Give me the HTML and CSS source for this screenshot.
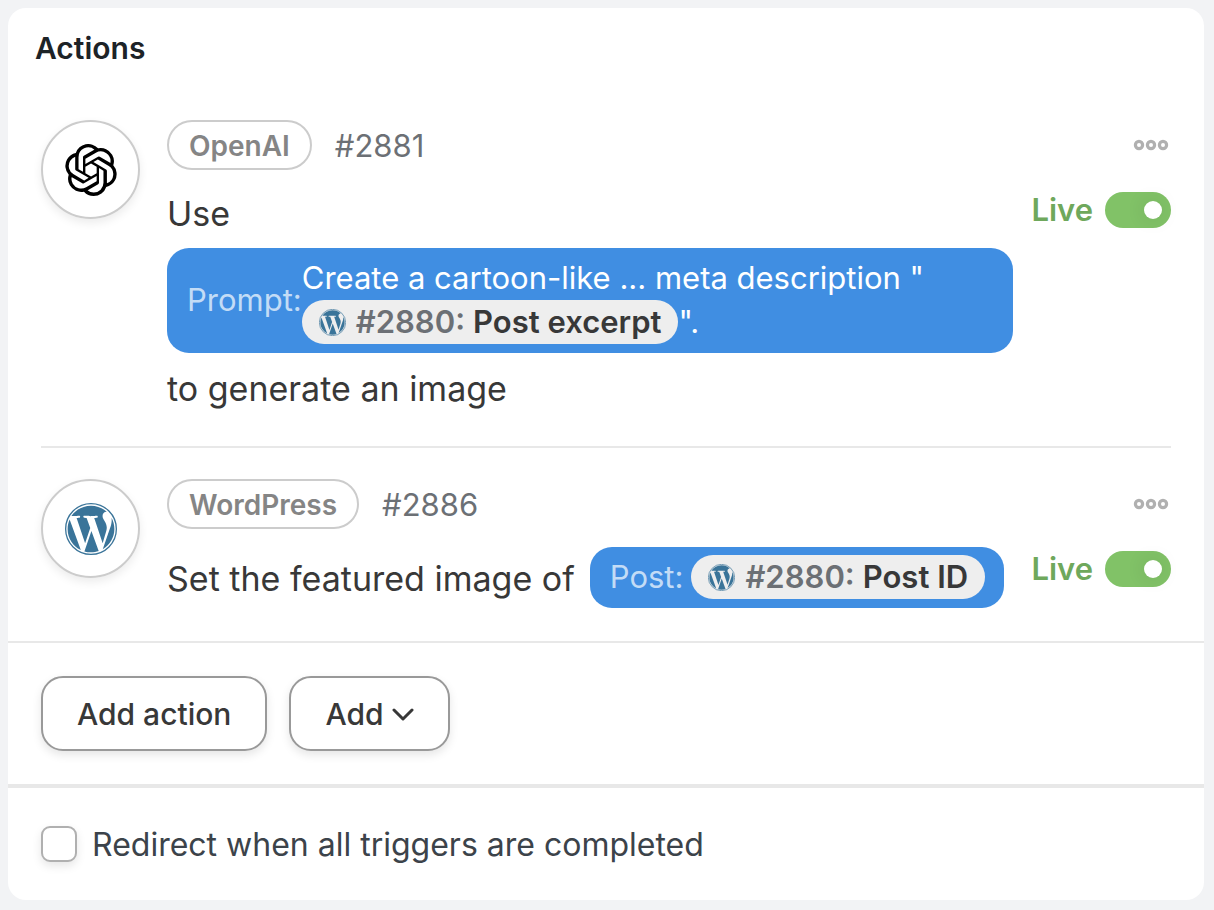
FILE: index.html
```html
<!doctype html>
<html lang="en">
<head>
    <meta charset="utf-8">
    <meta name="viewport" content="width=device-width, initial-scale=1">
    <title>Actions</title>
    <link rel="stylesheet" href="styles.css">
</head>
<body>
<!-- shared logo -->
<svg class="sprite" aria-hidden="true">
    <symbol id="wordpress" viewBox="0 0 24 24">
        <circle cx="12" cy="12" r="11.7" fill="none" stroke="currentColor" stroke-width=".6"/>
        <path fill="currentColor" d="M21.469 6.825c.84 1.537 1.318 3.3 1.318 5.175 0 3.979-2.156 7.456-5.363 9.325l3.295-9.527c.615-1.54.82-2.771.82-3.864 0-.405-.026-.78-.07-1.11m-7.981.105c.647-.03 1.232-.105 1.232-.105.582-.075.514-.93-.067-.899 0 0-1.755.135-2.88.135-1.064 0-2.85-.15-2.85-.15-.585-.03-.661.855-.075.885 0 0 .54.061 1.125.09l1.68 4.605-2.37 7.08L5.354 6.9c.649-.03 1.234-.1 1.234-.1.585-.075.516-.93-.065-.896 0 0-1.746.138-2.874.138-.2 0-.438-.008-.69-.015C4.911 3.15 8.235 1.215 12 1.215c2.809 0 5.365 1.072 7.286 2.833-.046-.003-.091-.009-.141-.009-1.06 0-1.812.923-1.812 1.914 0 .89.513 1.643 1.06 2.531.411.72.89 1.643.89 2.977 0 .915-.354 1.994-.821 3.479l-1.075 3.585-3.9-11.61.001.014zM12 22.784c-1.059 0-2.081-.153-3.048-.437l3.237-9.406 3.315 9.087c.024.053.05.101.078.149-1.12.393-2.325.609-3.582.609M1.211 12c0-1.564.336-3.05.935-4.39L7.29 21.709C3.694 19.96 1.212 16.271 1.211 12"/>
    </symbol>
    <symbol id="dots" viewBox="0 0 36 12">
        <g fill="none" stroke="currentColor" stroke-width="3.2">
            <circle cx="6" cy="6" r="3.6"/>
            <circle cx="18" cy="6" r="3.6"/>
            <circle cx="30" cy="6" r="3.6"/>
        </g>
    </symbol>
</svg>

<main class="card">
    <h2 class="card-title">Actions</h2>

    <div class="action-list">
        <section class="action">
            <div class="action-icon">
                <svg class="logo" viewBox="0 0 24 24" aria-hidden="true">
                    <path d="M22.2819 9.8211a5.9847 5.9847 0 0 0-.5157-4.9108 6.0462 6.0462 0 0 0-6.5098-2.9A6.0651 6.0651 0 0 0 4.9807 4.1818a5.9847 5.9847 0 0 0-3.9977 2.9 6.0462 6.0462 0 0 0 .7427 7.0966 5.98 5.98 0 0 0 .511 4.9107 6.051 6.051 0 0 0 6.5146 2.9001A5.9847 5.9847 0 0 0 13.2599 24a6.0557 6.0557 0 0 0 5.7718-4.2058 5.9894 5.9894 0 0 0 3.9977-2.9001 6.0557 6.0557 0 0 0-.7475-7.0729zm-9.022 12.6081a4.4755 4.4755 0 0 1-2.8764-1.0408l.1419-.0804 4.7783-2.7582a.7948.7948 0 0 0 .3927-.6813v-6.7369l2.02 1.1686a.071.071 0 0 1 .038.052v5.5826a4.504 4.504 0 0 1-4.4945 4.4944zm-9.6607-4.1254a4.4708 4.4708 0 0 1-.5346-3.0137l.142.0852 4.783 2.7582a.7712.7712 0 0 0 .7806 0l5.8428-3.3685v2.3324a.0804.0804 0 0 1-.0332.0615L9.74 19.9502a4.4992 4.4992 0 0 1-6.1408-1.6464zM2.3408 7.8956a4.485 4.485 0 0 1 2.3655-1.9728V11.6a.7664.7664 0 0 0 .3879.6765l5.8144 3.3543-2.0201 1.1685a.0757.0757 0 0 1-.071 0l-4.8303-2.7865A4.504 4.504 0 0 1 2.3408 7.872zm16.5963 3.8558L13.1038 8.364 15.1192 7.2a.0757.0757 0 0 1 .071 0l4.8303 2.7913a4.4944 4.4944 0 0 1-.6765 8.1042v-5.6772a.79.79 0 0 0-.407-.667zm2.0107-3.0231l-.142-.0852-4.7735-2.7818a.7759.7759 0 0 0-.7854 0L9.409 9.2297V6.8974a.0662.0662 0 0 1 .0284-.0615l4.8303-2.7866a4.4992 4.4992 0 0 1 6.6802 4.66zM8.3065 12.863l-2.02-1.1638a.0804.0804 0 0 1-.038-.0567V6.0742a4.4992 4.4992 0 0 1 7.3757-3.4537l-.142.0805L8.704 5.459a.7948.7948 0 0 0-.3927.6813zm1.0976-2.3654l2.602-1.4998 2.6069 1.4998v2.9994l-2.5974 1.4997-2.6067-1.4997Z"/>
                </svg>
            </div>
            <div class="action-body">
                <div class="action-meta">
                    <span class="badge">OpenAI</span>
                    <span class="action-id">#2881</span>
                </div>
                <div class="sentence">
                    <span class="sentence-text">Use</span>
                    <div class="field field-wide">
                        <span class="field-label">Prompt:</span>
                        <span class="field-value">Create a cartoon-like ... meta description "<span class="token"><svg class="token-icon" aria-hidden="true"><use href="#wordpress"/></svg><span class="token-id">#2880:</span> Post excerpt</span>".</span>
                    </div>
                    <span class="sentence-text">to generate an image</span>
                </div>
            </div>
            <div class="action-side">
                <button class="more" type="button" aria-label="More options"><svg class="more-icon"><use href="#dots"/></svg></button>
                <label class="live" for="live-2881">Live <input class="switch" id="live-2881" type="checkbox" checked></label>
            </div>
        </section>

        <section class="action">
            <div class="action-icon">
                <svg class="logo logo-wordpress" aria-hidden="true"><use href="#wordpress"/></svg>
            </div>
            <div class="action-body">
                <div class="action-meta">
                    <span class="badge">WordPress</span>
                    <span class="action-id">#2886</span>
                </div>
                <div class="sentence">
                    <span class="sentence-text">Set the featured image of</span>
                    <div class="field">
                        <span class="field-label">Post:</span>
                        <span class="token"><svg class="token-icon" aria-hidden="true"><use href="#wordpress"/></svg><span class="token-id">#2880:</span> Post ID</span>
                    </div>
                </div>
            </div>
            <div class="action-side">
                <button class="more" type="button" aria-label="More options"><svg class="more-icon"><use href="#dots"/></svg></button>
                <label class="live" for="live-2886">Live <input class="switch" id="live-2886" type="checkbox" checked></label>
            </div>
        </section>
    </div>

    <div class="toolbar">
        <button class="btn" type="button">Add action</button>
        <button class="btn" type="button">Add
            <svg class="chevron" viewBox="0 0 22 14" aria-hidden="true"><path d="M2 3l9 9 9-9"/></svg>
        </button>
    </div>

    <div class="redirect">
        <input class="check" id="redirect" type="checkbox">
        <label class="redirect-label" for="redirect">Redirect when all triggers are completed</label>
    </div>
</main>
</body>
</html>
```
FILE: styles.css
```css
* {
    box-sizing: border-box;
}

body {
    margin: 0;
    padding: 8px 10px 10px 8px;
    background: #f2f3f5;
    font-family: Inter, "Liberation Sans", sans-serif;
    font-size: 30px;
    color: #383838;
}

.sprite {
    display: none;
}

.card {
    background: #fff;
    border-radius: 18px;
}

.card-title {
    margin: 0;
    padding: 20px 27px 21px;
    font-size: 30px;
    line-height: 40px;
    font-weight: 600;
    color: #1d2327;
}

/* Actions */
.action-list {
    padding: 0 33px;
    border-bottom: 2px solid #e8e8e8;
}

.action {
    display: flex;
    padding: 31px 0 33px;
}

.action + .action {
    border-top: 2px solid #e8e8e8;
}

.action-icon {
    display: flex;
    align-items: center;
    justify-content: center;
    flex: none;
    width: 99px;
    height: 99px;
    margin-right: 27px;
    border: 2px solid #ccc;
    border-radius: 50%;
    box-shadow: 0 4px 10px rgba(0, 0, 0, .08);
}

.logo {
    width: 52px;
    height: 52px;
}

.logo-wordpress {
    color: #3a7499;
}

.action-body {
    flex: 1;
    min-width: 0;
}

.action-meta {
    display: flex;
    align-items: center;
    gap: 23px;
    margin-bottom: 18px;
}

.badge {
    padding: 2px 20px 0;
    border: 2px solid #ccc;
    border-radius: 25px;
    font-size: 28px;
    line-height: 44px;
    font-weight: 600;
    color: #858585;
}

.action-id {
    font-size: 31px;
    color: #6c7075;
}

.sentence {
    display: flex;
    flex-wrap: wrap;
    align-items: center;
    gap: 10px 15px;
    font-size: 34px;
    line-height: 48px;
}

.sentence-text {
    padding-top: 2px;
}

.field {
    display: flex;
    align-items: center;
    gap: 8px;
    padding: 8px 19px 9px 20px;
    border-radius: 22px;
    background: #408ee2;
    color: #fff;
    font-size: 31px;
    line-height: 44px;
}

.field-wide {
    width: 100%;
    gap: 0;
}

.field-label {
    color: #c3dcf6;
}

.token {
    display: inline-flex;
    align-items: center;
    gap: 8px;
    height: 44px;
    padding: 0 17px;
    border-radius: 22px;
    background: #eee;
    color: #383838;
    font-weight: 600;
    vertical-align: top;
}

.token-id {
    color: #6c7075;
}

.token-icon {
    width: 27px;
    height: 27px;
    margin-right: 2px;
    color: #3a7499;
}

.action-side {
    display: flex;
    flex-direction: column;
    align-items: flex-end;
    flex: none;
    margin-left: 18px;
}

.more {
    display: flex;
    align-items: center;
    height: 50px;
    padding: 0 2px;
    border: 0;
    background: none;
    color: #b0b0b0;
}

.more-icon {
    width: 36px;
    height: 12px;
}

.live {
    display: flex;
    align-items: center;
    gap: 12px;
    margin-top: 22px;
    font-size: 31px;
    line-height: 36px;
    font-weight: 600;
    color: #6fa85c;
}

.switch {
    appearance: none;
    display: flex;
    align-items: center;
    justify-content: flex-end;
    width: 66px;
    height: 36px;
    margin: 0;
    padding: 0 9px;
    border-radius: 18px;
    background: #81c267;
}

.switch::before {
    content: "";
    width: 18px;
    height: 18px;
    border-radius: 50%;
    background: #fff;
    box-shadow: 0 0 20px rgba(0, 0, 0, .12);
}

.switch:not(:checked) {
    justify-content: flex-start;
    background: #ccc;
}

/* Footer */
.toolbar {
    display: flex;
    gap: 22px;
    padding: 33px;
    border-bottom: 4px solid #e8e8e8;
}

.btn {
    display: flex;
    align-items: center;
    gap: 8px;
    height: 75px;
    padding: 0 34px;
    border: 2px solid #999;
    border-radius: 22px;
    background: #fff;
    box-shadow: 0 4px 10px rgba(0, 0, 0, .1);
    font: inherit;
    font-weight: 500;
    color: #383838;
}

.chevron {
    width: 22px;
    height: 14px;
    fill: none;
    stroke: currentColor;
    stroke-width: 3;
    stroke-linecap: round;
    stroke-linejoin: round;
}

.redirect {
    display: flex;
    align-items: center;
    gap: 15px;
    padding: 35px 33px;
    font-size: 32px;
    line-height: 40px;
    color: #3c434a;
}

.redirect-label {
    padding-top: 2px;
}

.check {
    appearance: none;
    width: 36px;
    height: 36px;
    margin: 0;
    border: 2px solid #b0b0b0;
    border-radius: 9px;
    background: #fff;
    box-shadow: 0 4px 10px rgba(0, 0, 0, .1);
}

.check:checked {
    background: #408ee2;
}
```
